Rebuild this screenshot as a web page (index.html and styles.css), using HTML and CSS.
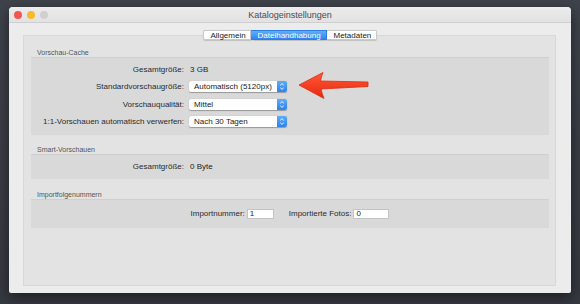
FILE: index.html
```html
<!DOCTYPE html>
<html lang="de">
<head>
  <meta charset="UTF-8">
  <title>Katalogeinstellungen</title>
  <link rel="stylesheet" href="styles.css">
</head>
<body>
  <div class="window">
    <div class="titlebar">
      <div class="lights">
        <span class="light red"></span>
        <span class="light yellow"></span>
        <span class="light gray"></span>
      </div>
      <div class="title">Katalogeinstellungen</div>
      <div></div>
    </div>
    <div class="content">
      <div class="tabs">
        <span class="tab">Allgemein</span>
        <span class="tab active">Dateihandhabung</span>
        <span class="tab">Metadaten</span>
      </div>
      <div class="panel">
        <!-- Vorschau-Cache -->
        <div class="group-label">Vorschau-Cache</div>
        <div class="group rows">
          <div class="label">Gesamtgröße:</div>
          <div class="value">3 GB</div>
          <div class="label">Standardvorschaugröße:</div>
          <div class="popup"><span>Automatisch (5120px)</span><span class="stepper"><svg width="10" height="11" viewBox="0 0 10 11"><path d="M3.2 4.3L5 2.6L6.8 4.3M3.2 6.7L5 8.4L6.8 6.7" fill="none" stroke="#fff" stroke-width="0.9"/></svg></span></div>
          <div class="label">Vorschauqualität:</div>
          <div class="popup"><span>Mittel</span><span class="stepper"><svg width="10" height="11" viewBox="0 0 10 11"><path d="M3.2 4.3L5 2.6L6.8 4.3M3.2 6.7L5 8.4L6.8 6.7" fill="none" stroke="#fff" stroke-width="0.9"/></svg></span></div>
          <div class="label">1:1-Vorschauen automatisch verwerfen:</div>
          <div class="popup"><span>Nach 30 Tagen</span><span class="stepper"><svg width="10" height="11" viewBox="0 0 10 11"><path d="M3.2 4.3L5 2.6L6.8 4.3M3.2 6.7L5 8.4L6.8 6.7" fill="none" stroke="#fff" stroke-width="0.9"/></svg></span></div>
        </div>

        <!-- Smart-Vorschauen -->
        <div class="group-label">Smart-Vorschauen</div>
        <div class="group rows single">
          <div class="label">Gesamtgröße:</div>
          <div class="value">0 Byte</div>
        </div>

        <!-- Importfolgenummern -->
        <div class="group-label">Importfolgenummern</div>
        <div class="group inline">
          <span class="label">Importnummer:</span>
          <span class="field">1</span>
          <span class="label spaced">Importierte Fotos:</span>
          <span class="field wide">0</span>
        </div>
      </div>
    </div>
    <svg class="arrow" width="76" height="32" viewBox="0 0 76 32">
      <defs>
        <linearGradient id="red" x1="0" y1="0" x2="0" y2="1">
          <stop offset="0" stop-color="#ff5a36"/>
          <stop offset="1" stop-color="#e8260f"/>
        </linearGradient>
      </defs>
      <path d="M3 15 L27 2.5 Q25 7 24.5 11 L72 12 L72 16.5 L25 19 Q26 24 28 28.5 Z" fill="url(#red)" stroke="#e0290f" stroke-width="0.8" stroke-linejoin="round"/>
    </svg>
  </div>
</body>
</html>
```

FILE: styles.css
```css
body {
  margin: 0;
  width: 580px;
  height: 304px;
  background: linear-gradient(#3f434b, #353940);
  font-family: "Liberation Sans", Arial, sans-serif;
  overflow: hidden;
}
.window {
  position: relative;
  width: 562px;
  height: 286px;
  margin: 7px 9px;
  background: #ececec;
  border-radius: 4px 4px 2px 2px;
  box-shadow: 0 4px 14px rgba(0,0,0,0.5);
  display: flex;
  flex-direction: column;
}
.titlebar {
  height: 15px;
  display: grid;
  grid-template-columns: 1fr auto 1fr;
  align-items: center;
  background: linear-gradient(#ececec, #e2e2e2);
  border-bottom: 1px solid #cfcfcf;
  border-radius: 4px 4px 0 0;
}
.lights {
  display: flex;
  gap: 5px;
  padding-left: 5px;
}
.light {
  width: 8px;
  height: 8px;
  border-radius: 50%;
}
.red { background: #f4564e; }
.yellow { background: #f8b92a; }
.gray { background: #d0d0d0; }
.title {
  font-size: 9px;
  color: #4d4d4d;
}
.content {
  flex: 1;
  display: flex;
  flex-direction: column;
  padding: 7px 15px 7px 14px;
}
.tabs {
  position: relative;
  z-index: 1;
  display: flex;
  justify-content: center;
  height: 10px;
}
.tab {
  height: 10px;
  line-height: 10px;
  padding: 0 7px;
  font-size: 8px;
  color: #222;
  background: #fff;
  border: 1px solid #c9c9c9;
  border-left: none;
  box-sizing: border-box;
  box-shadow: 0 0.5px 1px rgba(0,0,0,0.15);
}
.tab:first-child {
  border-left: 1px solid #c9c9c9;
  border-radius: 2px 0 0 2px;
  width: 48px;
  text-align: center;
}
.tab:last-child {
  border-radius: 0 2px 2px 0;
  width: 50px;
  text-align: center;
}
.tab.active {
  width: 76px;
  text-align: center;
  color: #fff;
  background: linear-gradient(#62aefb, #2d86f0);
  border-color: #2a7fe6;
}
.panel {
  flex: 1;
  margin-top: -5px;
  background: #e3e3e3;
  border: 1px solid #d8d8d8;
  padding: 13px 6px 0 7px;
}
.group-label {
  font-size: 7px;
  line-height: 8px;
  height: 8px;
  padding-left: 6px;
  color: #555;
  margin-top: 11.5px;
}
.group-label:first-child {
  margin-top: 0;
}
.group {
  background: #d9d9d9;
  border-top: 1px solid #cfcfcf;
  border-radius: 1px;
}
.rows {
  display: grid;
  grid-template-columns: 153px 1fr;
  column-gap: 5px;
  row-gap: 6.5px;
  align-items: center;
  padding: 5.5px 0 7.5px;
}
.rows.single {
  padding: 6px 0 7px;
}
.label {
  font-size: 8px;
  line-height: 11px;
  color: #2b2b2b;
  text-align: right;
}
.value {
  font-size: 8px;
  line-height: 11px;
  color: #222;
  padding-left: 1px;
}
.popup {
  width: 98px;
  height: 11px;
  display: flex;
  justify-content: space-between;
  background: #fff;
  border-radius: 2px;
  box-shadow: 0 0.5px 1px rgba(0,0,0,0.3);
  font-size: 8px;
  line-height: 11px;
  color: #222;
}
.popup span:first-child {
  padding-left: 5px;
}
.stepper {
  width: 10px;
  height: 11px;
  display: flex;
  background: linear-gradient(#5eabfa, #2c82ec);
  border-radius: 0 2px 2px 0;
}
.inline {
  display: flex;
  justify-content: center;
  align-items: center;
  padding: 8.5px 0 9px;
}
.inline .label {
  margin-right: 2px;
}
.inline .spaced {
  margin-left: 15px;
}
.field {
  width: 27px;
  height: 10px;
  box-sizing: border-box;
  background: #fff;
  border: 1px solid #c4c4c4;
  font-size: 8px;
  line-height: 8px;
  padding-left: 2px;
  color: #222;
}
.field.wide {
  width: 36px;
}
.arrow {
  position: absolute;
  left: 287px;
  top: 63px;
}
```
